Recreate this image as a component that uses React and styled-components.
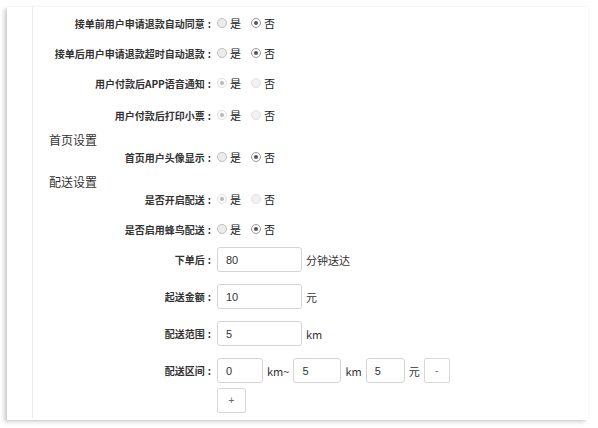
import styled, { createGlobalStyle } from 'styled-components';

const GlobalStyle = createGlobalStyle`
    body {
        margin: 0;
        background: #fff;
        font-family: "Noto Sans CJK SC", "Liberation Sans", sans-serif;
        color: #333;
    }
`;

const switches = [
    { label: '接单前用户申请退款自动同意', value: 'no', mb: 14 },
    { label: '接单后用户申请退款超时自动退款', value: 'no', mb: 14 },
    { label: '用户付款后APP语音通知', value: 'yes', disabled: true, mb: 16 },
    { label: '用户付款后打印小票', value: 'yes', disabled: true, mb: 8 },
];

export default function App() {
    return (
        <>
        <GlobalStyle />
        <Page>
        <Card>
        <Sidebar />
        <Content>
        {switches.map((s) => (
            <SwitchRow key={s.label} {...s} />
        ))}
        <SectionTitle>首页设置</SectionTitle>
        <SwitchRow label="首页用户头像显示" value="no" mb={8} />
        <SectionTitle>配送设置</SectionTitle>
        <SwitchRow label="是否开启配送" value="yes" disabled mb={14} />
        <SwitchRow label="是否启用蜂鸟配送" value="no" mb={10} />

        <FieldRow $mb={12}>
        <Label>下单后<Colon>:</Colon></Label>
        <Input defaultValue="80" $w={85} />
        <Unit>分钟送达</Unit>
        </FieldRow>
        <FieldRow $mb={12}>
        <Label>起送金额<Colon>:</Colon></Label>
        <Input defaultValue="10" $w={85} />
        <Unit>元</Unit>
        </FieldRow>
        <FieldRow $mb={12}>
        <Label>配送范围<Colon>:</Colon></Label>
        <Input defaultValue="5" $w={85} />
        <Unit>km</Unit>
        </FieldRow>
        <FieldRow $mb={5}>
        <Label>配送区间<Colon>:</Colon></Label>
        <Input defaultValue="0" $w={46} />
        <Unit>km~</Unit>
        <Input defaultValue="5" $w={48} />
        <Unit>km</Unit>
        <Input defaultValue="5" $w={39} />
        <Unit>元</Unit>
        <SmallButton $w={26}>-</SmallButton>
        </FieldRow>
        <FieldRow>
        <Label />
        <SmallButton $w={29}>+</SmallButton>
        </FieldRow>
        </Content>
        </Card>
        </Page>
        </>
    )
}

function SwitchRow({ label, value, disabled, mb }) {
    return (
        <Row $mb={mb}>
        <Label>{label}<Colon>:</Colon></Label>
        <Option>
        <Radio $checked={value === 'yes'} $disabled={disabled} />
        是
        </Option>
        <Option>
        <Radio $checked={value === 'no'} $disabled={disabled} />
        否
        </Option>
        </Row>
    )
}

const Page = styled.div`
    padding: 7px 10px 8px 7px;
`

const Card = styled.div`
    display: flex;
    width: 581px;
    height: 413px;
    background: #fff;
    box-shadow: -3px 2px 4px rgba(0, 0, 0, 0.18), 0 0 2px rgba(0, 0, 0, 0.08);
`

const Sidebar = styled.div`
    width: 25px;
    border-right: 1px solid #ececec;
    margin-bottom: 2px;
`

const Content = styled.div`
    display: flex;
    flex-direction: column;
    padding-top: 8px;
    flex: 1;
`

const Row = styled.div`
    display: flex;
    align-items: center;
    height: 16px;
    margin-bottom: ${(p) => p.$mb || 0}px;
`

const Label = styled.span`
    width: 180px;
    flex-shrink: 0;
    text-align: right;
    font-size: 10px;
    font-weight: 600;
    color: #333;
    white-space: nowrap;
    margin-right: 4px;
`

const Colon = styled.span`
    display: inline-block;
    margin: 0 2px 0 3px;
    font-size: 10px;
`

const Option = styled.label`
    display: flex;
    align-items: center;
    width: 34px;
    font-size: 11px;
    color: #222;
`

const Radio = styled.span`
    position: relative;
    width: 8px;
    height: 8px;
    margin-right: 3px;
    border-radius: 50%;
    border: 1px solid ${(p) => (p.$disabled ? '#e0e0e0' : p.$checked ? '#9a9a9a' : '#bdbdbd')};
    background: ${(p) => (p.$disabled && !p.$checked ? '#f2f2f2' : p.$checked ? '#fafafa' : '#ececec')};

    &::after {
        content: '';
        display: ${(p) => (p.$checked ? 'block' : 'none')};
        position: absolute;
        left: 2px;
        top: 2px;
        width: 4px;
        height: 4px;
        border-radius: 50%;
        background: ${(p) => (p.$disabled ? '#b8b8b8' : '#555')};
    }
`

const SectionTitle = styled.div`
    height: 18px;
    line-height: 18px;
    padding-left: 16px;
    font-size: 12px;
    color: #333;
`

const FieldRow = styled.div`
    display: flex;
    align-items: center;
    height: 25px;
    margin-bottom: ${(p) => p.$mb || 0}px;
`

const Input = styled.input`
    box-sizing: border-box;
    width: ${(p) => p.$w}px;
    height: 25px;
    padding: 0 0 0 8px;
    border: 1px solid #d4d4d4;
    border-radius: 3px;
    font-family: "Liberation Sans", sans-serif;
    font-size: 11px;
    color: #333;
    outline: none;
`

const Unit = styled.span`
    margin: 0 4px 0 4px;
    font-size: 11px;
    color: #333;
`

const SmallButton = styled.button`
    box-sizing: border-box;
    width: ${(p) => p.$w}px;
    height: 25px;
    padding: 0;
    border: 1px solid #d8d8d8;
    border-radius: 2px;
    background: #fff;
    font-family: "Liberation Sans", sans-serif;
    font-size: 10px;
    color: #666;
`
